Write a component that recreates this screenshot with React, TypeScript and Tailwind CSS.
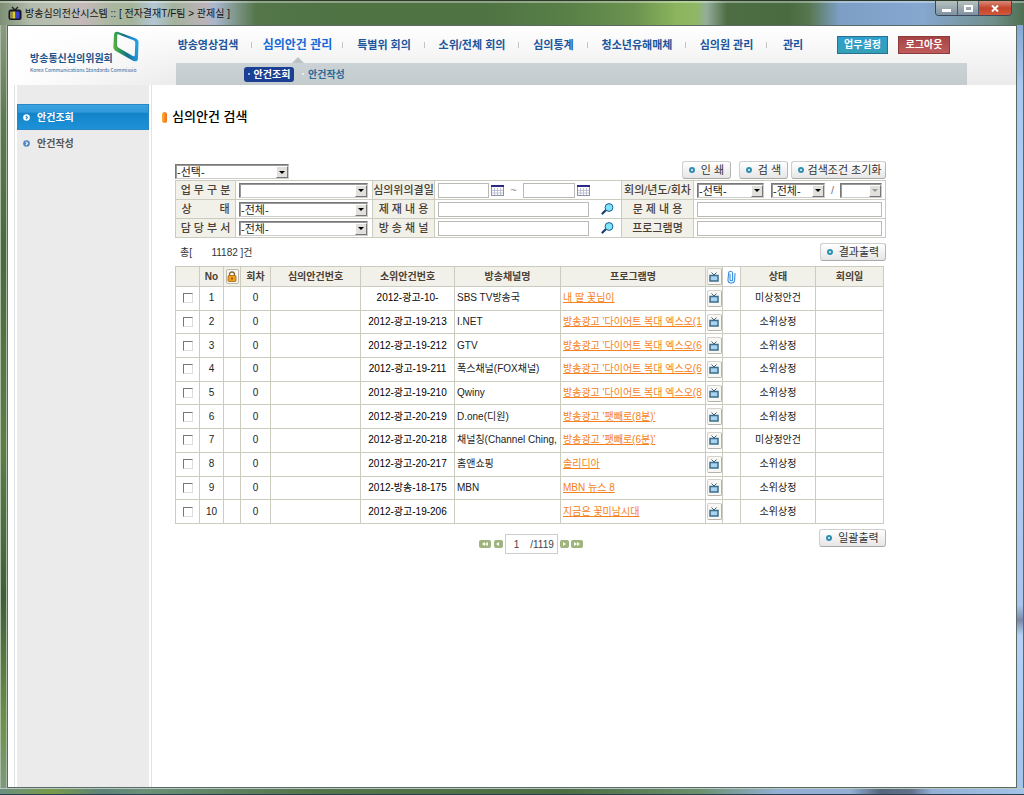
import React from "react";

const NAV = [
  { label: "방송영상검색", width: "w-[76px] pr-3" },
  { label: "심의안건 관리", width: "w-[91px]", active: true },
  { label: "특별위 회의", width: "w-[82px]" },
  { label: "소위/전체 회의", width: "w-[94px]" },
  { label: "심의통계", width: "w-[69px]" },
  { label: "청소년유해매체", width: "w-[98px]" },
  { label: "심의원 관리", width: "w-[81px]" },
  { label: "관리", width: "w-[52px]" },
];

const ROWS = [
  { no: 1, agenda: "2012-광고-10-", channel: "SBS TV방송국", program: "내 딸 꽃님이", status: "미상정안건" },
  { no: 2, agenda: "2012-광고-19-213", channel: "I.NET", program: "방송광고 '다이어트 복대 엑스오(1", status: "소위상정" },
  { no: 3, agenda: "2012-광고-19-212", channel: "GTV", program: "방송광고 '다이어트 복대 엑스오(6", status: "소위상정" },
  { no: 4, agenda: "2012-광고-19-211", channel: "폭스채널(FOX채널)", program: "방송광고 '다이어트 복대 엑스오(6", status: "소위상정" },
  { no: 5, agenda: "2012-광고-19-210", channel: "Qwiny", program: "방송광고 '다이어트 복대 엑스오(8", status: "소위상정" },
  { no: 6, agenda: "2012-광고-20-219", channel: "D.one(디원)", program: "방송광고 '팻빼로(8분)'", status: "소위상정" },
  { no: 7, agenda: "2012-광고-20-218", channel: "채널칭(Channel Ching,", program: "방송광고 '팻빼로(6분)'", status: "미상정안건" },
  { no: 8, agenda: "2012-광고-20-217", channel: "홈앤쇼핑", program: "솔리디아", status: "소위상정" },
  { no: 9, agenda: "2012-방송-18-175", channel: "MBN", program: "MBN 뉴스 8", status: "소위상정" },
  { no: 10, agenda: "2012-광고-19-206", channel: "", program: "지금은 꽃미남시대", status: "소위상정" },
];

function AppIcon() {
  return (
    <svg width="14" height="15" viewBox="0 0 14 15" aria-hidden="true">
      <path d="M4 1l3 3 3-3" stroke="#222" strokeWidth="1.4" fill="none" />
      <rect x="0.5" y="3.5" width="13" height="10.5" rx="2.5" fill="#151525" />
      <rect x="2" y="5.5" width="2.5" height="7" fill="#8a8a5a" />
      <rect x="4.5" y="5.5" width="3" height="7" fill="#e0d02a" />
      <rect x="7.500" y="5.5" width="4" height="7" fill="#3a3fd0" />
    </svg>
  );
}

function LogoMark() {
  return (
    <svg width="26" height="31" viewBox="0 0 26 31" aria-hidden="true">
      <defs>
        <linearGradient id="mark" x1="0" y1="0.6" x2="1" y2="0.4">
          <stop offset="0" stopColor="#6fb52f" />
          <stop offset="0.25" stopColor="#2a9a5a" />
          <stop offset="0.5" stopColor="#14708c" />
          <stop offset="0.8" stopColor="#1f8fd6" />
          <stop offset="1" stopColor="#22a6e6" />
        </linearGradient>
      </defs>
      <path
        fillRule="evenodd"
        fill="url(#mark)"
        d="M4.500 0.800 Q1 0.500 1 4 L0.300 16 Q0.200 18.500 2.300 19.700 L20 29.800 Q24.800 31.500 25 27.500 L25.500 11.500 Q25.500 8.500 22.500 7.300 Z M5.200 3.200 L21 9.500 Q22.300 10.200 22.300 12 L21.800 24 Q21.600 26 19.800 25 L5.500 16.700 Q3.800 15.500 4 14 L4.200 4.300 Q4.200 2.900 5.200 3.200 Z"
      />
    </svg>
  );
}

function TvIcon() {
  return (
    <svg width="10" height="10" viewBox="0 0 10 10" aria-hidden="true">
      <path d="M2.500 0.500L5 3L7.500 0.500" stroke="#3d6076" strokeWidth="1" fill="none" />
      <rect x="1" y="3.500" width="8" height="5.500" fill="#a9d3ef" stroke="#3d6c8c" strokeWidth="1.500" />
    </svg>
  );
}

function LockIcon() {
  return (
    <svg width="10" height="11" viewBox="0 0 10 11" aria-hidden="true">
      <path d="M2.500 5V3.500a2.500 2.500 0 0 1 5 0V5" stroke="#8a6a3a" strokeWidth="1.300" fill="none" />
      <rect x="1" y="4.500" width="8" height="6" rx="1" fill="#f0a020" stroke="#a5640a" strokeWidth="0.800" />
      <rect x="4.400" y="6.500" width="1.300" height="2" fill="#7a4300" />
    </svg>
  );
}

function ClipIcon() {
  return (
    <svg width="9" height="14" viewBox="0 0 9 14" aria-hidden="true" className="mx-auto">
      <path
        d="M3 4v5.500a1.300 1.300 0 0 0 2.600 0V3a2 2 0 0 0-3.900-.3L1 9.500a3.300 3.300 0 0 0 6.600.5L8 3.500"
        stroke="#3b8ddb"
        strokeWidth="1.100"
        fill="none"
        strokeLinecap="round"
      />
    </svg>
  );
}

function CalendarButton({ label }: { label: string }) {
  return (
    <button aria-label={label} className="shrink-0">
      <svg width="13" height="11" viewBox="0 0 13 11" aria-hidden="true" className="block">
        <rect x="0.500" y="0.500" width="12" height="10" fill="#fff" stroke="#8d93a8" />
        <rect x="0" y="0" width="13" height="2" fill="#2b2b85" />
        <path d="M1 5.500h11M1 8h11M3.500 3v7M6.500 3v7M9.500 3v7" stroke="#b9bdd0" strokeWidth="0.900" />
      </svg>
    </button>
  );
}

function MagnifierButton({ label }: { label: string }) {
  return (
    <button aria-label={label} className="ml-3 shrink-0">
      <svg width="13" height="12" viewBox="0 0 13 12" aria-hidden="true" className="block">
        <path d="M5.500 6.500L1.500 10.500" stroke="#123a6b" strokeWidth="2.200" strokeLinecap="round" />
        <circle cx="8" cy="4.500" r="3.900" fill="#7fe6fa" stroke="#1d5c94" strokeWidth="1" />
      </svg>
    </button>
  );
}

function Dropdown({ label, value, className, disabled = false }: { label: string; value: string; className: string; disabled?: boolean }) {
  return (
    <span className={`relative flex h-[15px] shrink-0 ${className}`}>
      <select
        aria-label={label}
        disabled={disabled}
        className="h-full w-full appearance-none rounded-none border border-t-[#777] border-l-[#777] border-r-[#ccc] border-b-[#ccc] bg-white pt-px pl-px text-[11px] leading-[13px] text-[#222] shadow-[inset_1px_1px_0_#999]"
      >
        <option>{value}</option>
      </select>
      <span className="pointer-events-none absolute top-[2px] right-[1px] bottom-[1px] flex w-3 items-center justify-center border border-t-white border-l-white border-r-[#777] border-b-[#777] bg-[#e2e0dc]">
        <svg width="6" height="3" viewBox="0 0 6 3" aria-hidden="true">
          <path d="M0 0h6L3 3z" fill={disabled ? "#999" : "#000"} />
        </svg>
      </span>
    </span>
  );
}

function TextBox({ label, className }: { label: string; className: string }) {
  return <input type="text" aria-label={label} className={`h-[15px] border border-[#b9b9b5] bg-white px-1 text-[11px] ${className}`} />;
}

function ActionButton({ children, className }: { children: React.ReactNode; className: string }) {
  return (
    <button
      className={`flex h-[18px] items-center rounded-[3px] border border-[#cfcfcf] border-b-[#a9a9a9] border-r-[#b5b5b5] bg-linear-to-b from-white to-[#e6e6e6] pl-[6px] text-[11px] leading-none text-[#333] ${className}`}
    >
      <span className="size-[6px] shrink-0 rounded-full border-2 border-[#2f8fb0]" />
      <span className="grow text-center whitespace-nowrap">{children}</span>
    </button>
  );
}

function FieldLabel({ children }: { children: React.ReactNode }) {
  return (
    <div className="flex items-center justify-center border-r border-b border-[#cbcbc0] bg-[#f1f0e9] pt-px font-medium whitespace-nowrap text-[#4a3f35]">
      {children}
    </div>
  );
}

function Field({ children }: { children: React.ReactNode }) {
  return <div className="flex min-w-0 items-center border-r border-b border-[#cbcbc0] px-[3px]">{children}</div>;
}

function PagerButton({ label, d, className }: { label: string; d: string; className: string }) {
  return (
    <button aria-label={label} className={`flex h-2 items-center justify-center rounded-[2px] bg-[#9db47c] ${className}`}>
      <svg width="8" height="4" viewBox="0 0 8 4" aria-hidden="true">
        <path d={d} fill="#fff" />
      </svg>
    </button>
  );
}

function TitleBar() {
  return (
    <div className="flex h-[25px] items-start justify-between border-t border-[#2c3a2a] bg-[linear-gradient(90deg,#7d8f74_0,#b3bcac_3%,#b9c0b2_6%,#c6b9ba_8%,#a9b79f_11%,#a5b59c_13%,#b3c6d6_15%,#a3b39c_17%,#bcb3b8_20%,#a9b6cc_21%,#54764a_25%,#4f7343_33%,#4f7343_47%,#5a8148_56%,#6c934f_62%,#8bb45d_66%,#8fb766_68%,#93ad9a_69%,#4d6d42_71%,#4a6b40_77%,#56774f_79%,#7d9fc6_82%,#86a7d0_90%,#6f8f8a_97%,#4f6f52_100%)] pl-2 shadow-[inset_0_2px_0_rgba(255,255,255,0.35)]">
      <div className="flex h-full items-center gap-[3px] text-[10px] whitespace-nowrap text-[#151515]">
        <AppIcon />
        <span>방송심의전산시스템 :: [ 전자결재T/F팀 &gt; 관제실 ]</span>
      </div>
      <div className="mr-3 flex h-[15px] overflow-hidden rounded-b-[4px] border border-t-0 border-[#3a4a5c]">
        <button aria-label="최소화" className="flex w-[22px] items-center justify-center border-r border-[#4a5a6c] bg-linear-to-b from-[#b6c2bd] to-[#7f90a2]">
          <span className="mt-1 h-[3px] w-[9px] bg-white" />
        </button>
        <button aria-label="최대화" className="flex w-[21px] items-center justify-center border-r border-[#4a5a6c] bg-linear-to-b from-[#b6c2bd] to-[#7f90a2]">
          <span className="h-[7px] w-[9px] border-2 border-white" />
        </button>
        <button aria-label="닫기" className="flex w-[32px] items-center justify-center bg-linear-to-b from-[#d98a78] via-[#c4432b] to-[#d2593c]">
          <svg width="8" height="7" viewBox="0 0 8 7" aria-hidden="true">
            <path d="M1 0.500l6 6M7 0.500l-6 6" stroke="#fff" strokeWidth="2" />
          </svg>
        </button>
      </div>
    </div>
  );
}

function Header() {
  return (
    <header className="flex h-[59px] bg-linear-to-b from-white to-[#ebebeb]">
      <a href="#" className="relative block w-[168px] shrink-0 bg-linear-to-r from-white to-transparent pt-[26px] pl-[22px] whitespace-nowrap">
        <span className="absolute top-[5px] left-[105px]">
          <LogoMark />
        </span>
        <span className="block text-[10px] leading-[14px] font-bold text-[#1d5288]">방송통신심의위원회</span>
        <span className="block font-['Noto_Sans_CJK_KR',sans-serif] text-[5px] leading-[7px] text-[#2c639b]">Korea Communications Standards Commissio</span>
      </a>
      <div className="flex min-w-0 grow flex-col">
        <div className="flex h-[37px] items-center">
          <nav>
            <ul className="flex">
              {NAV.map((item, i) => (
                <li key={item.label} className={`relative flex h-[37px] shrink-0 items-center justify-center pt-px whitespace-nowrap ${item.width}`}>
                  <a href="#" className={item.active ? "text-[12px] font-bold text-[#1668d8]" : "text-[11px] font-bold text-[#1c559c]"}>
                    {item.label}
                  </a>
                  {i < NAV.length - 1 && <span className="absolute right-0 h-[6px] w-px bg-[#c4c4c4]" />}
                  {item.active && (
                    <svg width="12" height="6" viewBox="0 0 12 6" className="absolute bottom-0" aria-hidden="true">
                      <path d="M0 6L6 0l6 6z" fill="#bcc3c6" />
                    </svg>
                  )}
                </li>
              ))}
            </ul>
          </nav>
          <div className="ml-[18px] flex shrink-0 gap-[10px] text-[10px] font-bold text-white">
            <button className="h-[18px] w-[51px] border border-[#28708f] bg-linear-to-b from-[#2f9fce] to-[#35a0b8] leading-none whitespace-nowrap">업무설정</button>
            <button className="h-[18px] w-[52px] border border-[#8a3c3c] bg-linear-to-b from-[#a64343] to-[#bf5b5b] leading-none whitespace-nowrap">로그아웃</button>
          </div>
        </div>
        <div className="mr-[49px] flex h-[22px] items-center gap-2 bg-linear-to-b from-[#ccd3d6] to-[#c3cbcd] pl-[68px] text-[10px] font-bold whitespace-nowrap">
          <a href="#" className="flex h-[15px] w-[50px] items-center justify-center gap-1 rounded-[3px] bg-[#1b3f92] text-white">
            <span className="size-[2px] bg-[#8fb4f0]" />
            안건조회
          </a>
          <a href="#" className="flex items-center gap-1 text-[#2b6a96]">
            <span className="size-[2px] bg-[#e8eef0]" />
            안건작성
          </a>
        </div>
      </div>
    </header>
  );
}

function SideLink({ label, active = false }: { label: string; active?: boolean }) {
  return (
    <a
      href="#"
      className={`flex h-[26px] items-center gap-[7px] border pt-px pl-[5px] text-[10px] font-bold ${
        active
          ? "border-[#2a87c4] bg-[linear-gradient(180deg,#3aa2e0_0,#2f99da_30%,#1383c9_34%,#1d92d8_100%)] text-white"
          : "border-transparent text-[#555]"
      }`}
    >
      <svg width="7" height="7" viewBox="0 0 7 7" aria-hidden="true">
        <circle cx="3.500" cy="3.500" r="3.300" fill={active ? "#fff" : "#4f86c4"} />
        <path d="M2.800 1.800l1.700 1.700-1.700 1.700" stroke={active ? "#1c84c8" : "#fff"} strokeWidth="1.100" fill="none" />
      </svg>
      {label}
    </a>
  );
}

function SearchForm() {
  return (
    <div className="grid auto-rows-[19px] grid-cols-[60px_137px_62px_1fr_72px_192px] border-t border-l border-[#cbcbc0] text-[11px]">
      <FieldLabel>업 무 구 분</FieldLabel>
      <Field>
        <Dropdown label="업무구분" value="" className="w-[129px]" />
      </Field>
      <FieldLabel>심의위의결일</FieldLabel>
      <Field>
        <TextBox label="시작일" className="w-[51px]" />
        <span className="ml-[2px] flex">
          <CalendarButton label="시작일 선택" />
        </span>
        <span className="w-[19px] text-center text-[#888]">~</span>
        <TextBox label="종료일" className="w-[52px]" />
        <span className="ml-[2px] flex">
          <CalendarButton label="종료일 선택" />
        </span>
      </Field>
      <FieldLabel>회의/년도/회차</FieldLabel>
      <Field>
        <Dropdown label="회의" value="-선택-" className="w-[67px]" />
        <span className="w-[7px]" />
        <Dropdown label="년도" value="-전체-" className="w-[54px]" />
        <span className="grow text-center text-[#777]">/</span>
        <Dropdown label="회차" value="" className="w-[42px]" disabled />
      </Field>

      <FieldLabel>
        <span className="flex w-12 justify-between">
          <span>상</span>
          <span>태</span>
        </span>
      </FieldLabel>
      <Field>
        <Dropdown label="상태" value="-전체-" className="w-[129px]" />
      </Field>
      <FieldLabel>제 재 내 용</FieldLabel>
      <Field>
        <TextBox label="제재내용" className="w-[151px]" />
        <MagnifierButton label="제재내용 찾기" />
      </Field>
      <FieldLabel>문 제 내 용</FieldLabel>
      <Field>
        <TextBox label="문제내용" className="w-full" />
      </Field>

      <FieldLabel>담 당 부 서</FieldLabel>
      <Field>
        <Dropdown label="담당부서" value="-전체-" className="w-[129px]" />
      </Field>
      <FieldLabel>방 송 채 널</FieldLabel>
      <Field>
        <TextBox label="방송채널" className="w-[151px]" />
        <MagnifierButton label="방송채널 찾기" />
      </Field>
      <FieldLabel>프로그램명</FieldLabel>
      <Field>
        <TextBox label="프로그램명" className="w-full" />
      </Field>
    </div>
  );
}

const TH = "border border-[#cbcbc0] bg-[#f1f0e9] p-0 font-bold text-[#4a3f35]";
const TD = "overflow-hidden border border-[#cbcbc0] p-0 text-center whitespace-nowrap";
const TD_LEFT = "overflow-hidden border border-[#cbcbc0] p-0 pl-[2px] text-left whitespace-nowrap";
const TV_BUTTON = "mx-auto flex h-[17px] w-[15px] items-center justify-center rounded-[2px] border border-[#d4d2ca] border-r-[#b4b2aa] border-b-[#b4b2aa] bg-[#f8f7f3]";

function ResultTable() {
  return (
    <table className="h-[258px] w-full table-fixed border-collapse text-[10px] leading-[16px] text-[#222]">
      <colgroup>
        <col className="w-[24px]" />
        <col className="w-[24px]" />
        <col className="w-[17px]" />
        <col className="w-[30px]" />
        <col className="w-[90px]" />
        <col className="w-[94px]" />
        <col className="w-[106px]" />
        <col />
        <col className="w-[17px]" />
        <col className="w-[18px]" />
        <col className="w-[75px]" />
        <col className="w-[68px]" />
      </colgroup>
      <thead>
        <tr className="h-[20px]">
          <th className={TH} />
          <th className={TH}>No</th>
          <th className={TH}>
            <span className="mx-auto flex h-[15px] w-[13px] items-center justify-center rounded-[2px] border border-[#bbb9b0] bg-[#f8f7f3]">
              <LockIcon />
            </span>
          </th>
          <th className={TH}>회차</th>
          <th className={TH}>심의안건번호</th>
          <th className={TH}>소위안건번호</th>
          <th className={TH}>방송채널명</th>
          <th className={TH}>프로그램명</th>
          <th className={TH}>
            <span className={TV_BUTTON}>
              <TvIcon />
            </span>
          </th>
          <th className="border border-[#cbcbc0] p-0">
            <ClipIcon />
          </th>
          <th className={TH}>상태</th>
          <th className={TH}>회의일</th>
        </tr>
      </thead>
      <tbody>
        {ROWS.map((row) => (
          <tr key={row.no}>
            <td className={TD}>
              <input
                type="checkbox"
                aria-label={`${row.no}`}
                className="mx-auto block size-[10px] appearance-none border border-t-[#777] border-l-[#777] border-r-[#ddd] border-b-[#ddd] bg-white checked:bg-[#555]"
              />
            </td>
            <td className={TD}>{row.no}</td>
            <td className={TD} />
            <td className={TD}>0</td>
            <td className={TD} />
            <td className={`${TD} text-black`}>{row.agenda}</td>
            <td className={TD_LEFT}>{row.channel}</td>
            <td className={TD_LEFT}>
              <a href="#" className="text-[#f58220] underline">
                {row.program}
              </a>
            </td>
            <td className={TD}>
              <button aria-label="영상" className={TV_BUTTON}>
                <TvIcon />
              </button>
            </td>
            <td className={TD} />
            <td className={TD}>{row.status}</td>
            <td className={TD} />
          </tr>
        ))}
      </tbody>
    </table>
  );
}

export default function App() {
  return (
    <div className="flex min-h-screen flex-col bg-[#4d6d42] font-['Liberation_Sans','Noto_Sans_CJK_KR',sans-serif]">
      <TitleBar />
      <div className="flex grow">
        <div className="w-[7px] shrink-0 border-x border-[#a9b9a2] bg-[linear-gradient(180deg,#8b9a84_0,#5d7a52_12%,#48693e_30%,#5b8046_55%,#3f5f3a_75%,#6d9448_92%,#7b9a80_100%)]" />
        <div className="flex min-w-0 grow flex-col border border-[#5c6a66] bg-white">
          <Header />
          <div className="flex grow">
            <aside className="ml-[6px] flex w-[138px] shrink-0 border-r border-l border-[#dfe3e6] px-[2px]">
              <div className="w-full bg-[#ebebeb] pt-[19px]">
                <SideLink label="안건조회" active />
                <SideLink label="안건작성" />
              </div>
            </aside>
            <main className="min-w-0 grow pt-[22px] pl-[10px]">
              <h1 className="flex h-5 items-center gap-[5px] text-[13px] font-medium text-black">
                <span className="h-[11px] w-[5px] rounded-full bg-linear-to-r from-[#f9b233] to-[#f26a1b]" />
                심의안건 검색
              </h1>
              <div className="mt-[34px] ml-[13px] w-full max-w-[711px]">
                <div className="flex h-[19px] items-start">
                  <div className="mt-[3px] grow">
                    <Dropdown label="구분" value="-선택-" className="w-[114px]" />
                  </div>
                  <ActionButton className="mr-2 w-[49px]">인 쇄</ActionButton>
                  <ActionButton className="mr-[3px] w-[49px]">검 색</ActionButton>
                  <ActionButton className="w-[95px]">검색조건 초기화</ActionButton>
                </div>
                <SearchForm />
                <div className="mt-[5px] flex h-[18px] items-center justify-between text-[#333]">
                  <span className="pl-[5px] text-[10px] whitespace-pre">총[{"       "}11182 ]건</span>
                  <ActionButton className="w-[66px]">결과출력</ActionButton>
                </div>
                <div className="mt-[5px] mr-[2px]">
                  <ResultTable />
                </div>
                <div className="mt-[5px] grid grid-cols-[1fr_auto_1fr] items-start">
                  <span />
                  <div className="mt-[5px] flex items-center">
                    <PagerButton label="처음" className="w-3" d="M4 0v4L1 2zM7 0v4L4 2z" />
                    <PagerButton label="이전" className="ml-[3px] w-[9px]" d="M5 0v4L2 2z" />
                    <span className="mx-[2px] flex h-[20px] w-[53px] items-center border border-[#ccc] text-[10px] text-[#444]">
                      <input aria-label="페이지" defaultValue="1" className="w-[22px] min-w-0 bg-transparent text-center" />
                      <span className="grow text-center">/1119</span>
                    </span>
                    <PagerButton label="다음" className="w-[9px]" d="M3 0v4l3-2z" />
                    <PagerButton label="마지막" className="ml-[2px] w-3" d="M1 0v4l3-2zM4 0v4l3-2z" />
                  </div>
                  <div className="flex justify-end">
                    <ActionButton className="w-[67px]">일괄출력</ActionButton>
                  </div>
                </div>
              </div>
            </main>
          </div>
        </div>
        <div className="w-[7px] shrink-0 border-r border-[#4a6a86] bg-[linear-gradient(180deg,#86a7d0_0,#a9c8ee_8%,#b5d2f5_40%,#a9c6ea_76%,#7d88a8_78%,#b5d2f5_80%,#a3c3e8_100%)]" />
      </div>
      <div className="h-[7px] border-t border-b border-t-[#b8c9c4] border-b-[#2c3f50] bg-[linear-gradient(90deg,#6b8f80_0,#7a9a48_5%,#5d8378_10%,#6a9078_14%,#55754a_30%,#4d6d42_55%,#6a8f6a_68%,#93b0d4_76%,#93b0d4_83%,#56657a_86%,#62708a_89%,#93b0d4_91%,#a3c3e8_100%)]" />
    </div>
  );
}
